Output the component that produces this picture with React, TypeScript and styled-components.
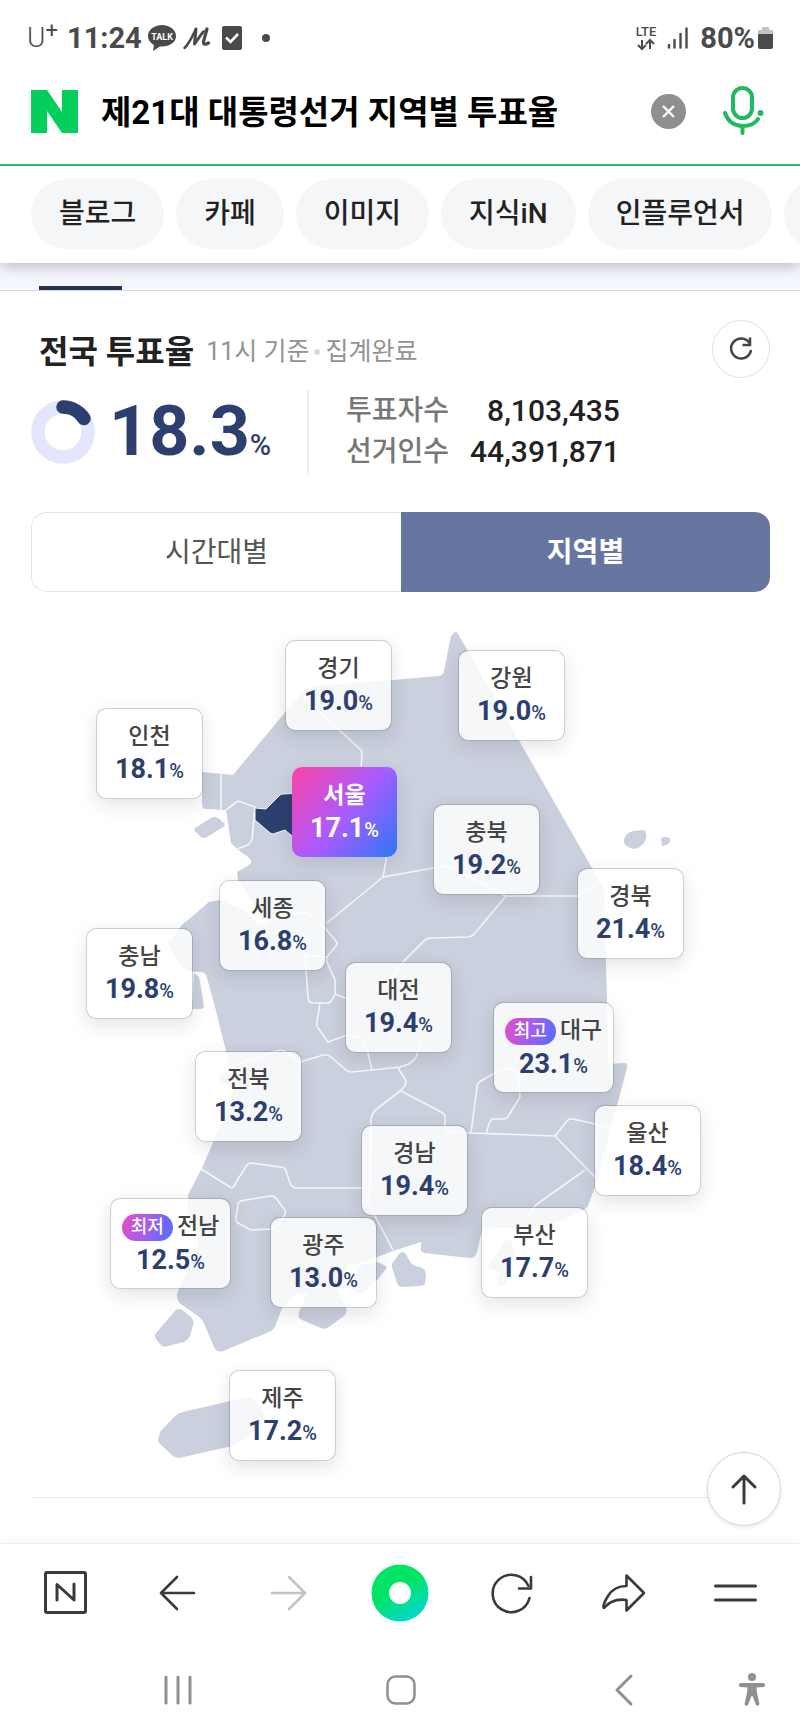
import React from "react";
import styled, { createGlobalStyle, css } from "styled-components";

const navy = "#2c3f6f";
const land = "#cad0de";
const ink = "#3a3a3e";
const fontStack = `Roboto, "Noto Sans CJK KR", sans-serif`;

const GlobalStyle = createGlobalStyle`
  *, *::before, *::after { box-sizing: border-box; }
  body { margin: 0; background: #fff; color: #222; font-family: ${fontStack}; }
  button, input { font-family: inherit; }
  svg { display: block; flex: none; overflow: visible; }
`;

const Page = styled.div`
  width: 100%;
  overflow: hidden;
  background: #fff;
`;

/* ---------- status bar ---------- */

const StatusBar = styled.div`
  position: relative;
  z-index: 2;
  display: flex;
  align-items: center;
  justify-content: space-between;
  height: 60px;
  padding: 16px 27px 0 27px;
  background: #fff;
  color: #4a4a4a;
`;

const StatusGroup = styled.div`
  display: flex;
  align-items: center;
`;

const Carrier = styled.span`
  display: flex;
  width: 40px;
  font-size: 28px;
  font-weight: 300;
  line-height: 32px;

  sup {
    font-size: 22px;
    font-weight: 400;
    line-height: 18px;
  }
`;

const StatusText = styled.span<{ $gap: number }>`
  margin-right: ${({ $gap }) => $gap}px;
  font-size: 29px;
  font-weight: 700;
  line-height: 32px;
`;

const StatusIcon = styled.svg<{ $gap: number }>`
  margin-right: ${({ $gap }) => $gap}px;
`;

/* ---------- search header ---------- */

const Header = styled.header`
  position: relative;
  z-index: 1;
  background: #fff;
  box-shadow: 0 3px 14px rgba(60, 60, 60, 0.35);
`;

const SearchForm = styled.form`
  display: flex;
  align-items: center;
  height: 106px;
  padding: 0 36px 2px 31px;
  border-bottom: 2px solid #37b36d;
`;

const SearchInput = styled.input`
  flex: 1;
  min-width: 0;
  margin: 0 16px 0 23px;
  padding: 3px 0 0;
  border: 0;
  outline: 0;
  background: none;
  color: #000;
  font-size: 33px;
  font-weight: 700;
  line-height: 44px;
`;

const IconButton = styled.button`
  display: grid;
  place-items: center;
  padding: 0;
  border: 0;
  background: none;
  color: ${ink};
`;

const ClearButton = styled(IconButton)`
  width: 35px;
  height: 35px;
  margin-right: 36px;
  border-radius: 50%;
  background: #8f8f8f;
`;

const ChipRow = styled.nav`
  display: flex;
  gap: 12px;
  padding: 13px 0 14px 31px;
  overflow: hidden;
`;

const Chip = styled.a`
  flex: none;
  min-width: 80px;
  height: 70px;
  padding: 0 28px;
  border-radius: 35px;
  background: #f5f6f8;
  color: #222;
  font-size: 28px;
  font-weight: 500;
  line-height: 70px;
  text-decoration: none;
`;

/* ---------- turnout summary ---------- */

const TabStrip = styled.div`
  display: flex;
  align-items: flex-end;
  height: 28px;
  padding-left: 39px;
  border-bottom: 1px solid #d5d8df;
  background: #f5f8ff;
`;

const TabIndicator = styled.span`
  width: 83px;
  height: 4px;
  background: #263258;
`;

const Summary = styled.section`
  padding: 29px 30px 0 31px;
`;

const HeadingRow = styled.div`
  display: flex;
  align-items: center;
  height: 58px;
  padding-left: 8px;
`;

const Heading = styled.h2`
  margin: 0 12px 0 0;
  padding-top: 6px;
  color: #222;
  font-size: 32px;
  font-weight: 700;
  line-height: 44px;
`;

const Basis = styled.p`
  display: flex;
  align-items: center;
  gap: 5px;
  flex: 1;
  margin: 0;
  padding-top: 6px;
  color: #939393;
  font-size: 25px;
  line-height: 36px;
`;

const Dot = styled.i`
  width: 6px;
  height: 6px;
  border-radius: 50%;
  background: #dadada;
`;

const RefreshButton = styled(IconButton)`
  width: 58px;
  height: 58px;
  border: 1px solid #e2e2e2;
  border-radius: 50%;
`;

const Figures = styled.div`
  display: flex;
  align-items: center;
  height: 83px;
  margin-top: 12px;
`;

const Rate = styled.strong`
  flex: none;
  width: 198px;
  margin-left: 14px;
  padding-top: 12px;
  color: ${navy};
  font-size: 70px;
  font-weight: 700;
  line-height: 80px;
  white-space: nowrap;
`;

const RateUnit = styled.small`
  font-size: 29px;
  font-weight: 500;
`;

const Counts = styled.table`
  height: 83px;
  padding-left: 37px;
  border-left: 2px solid #ececec;
  border-spacing: 0;
  font-size: 28px;
  line-height: 40px;

  th {
    padding: 0 21px 0 0;
    color: #777;
    font-weight: 500;
    text-align: left;
  }

  td {
    padding: 0;
    color: #222;
    font-size: 30px;
    font-weight: 500;
    text-align: right;
  }
`;

const Segments = styled.div`
  display: flex;
  height: 80px;
  margin-top: 39px;
  overflow: hidden;
  border-radius: 15px;
`;

const Segment = styled.button<{ $active?: boolean }>`
  flex: 1;
  padding: 0 0 4px;
  border: 1px solid #e4e4e4;
  border-right: 0;
  border-radius: 15px 0 0 15px;
  background: #fff;
  color: #555;
  font-size: 28px;
  font-weight: 400;

  ${({ $active }) =>
    $active &&
    css`
      border: 0;
      border-radius: 0;
      background: #6776a0;
      color: #fff;
      font-weight: 700;
    `}
`;

/* ---------- map ---------- */

const MapCanvas = styled.div`
  position: relative;
  max-width: 800px;
  margin: 18px auto 0;

  > svg {
    width: 100%;
    height: auto;
  }
`;

const MapPin = styled.button<{ $x: number; $y: number; $wide?: boolean; $selected?: boolean }>`
  position: absolute;
  left: ${({ $x }) => ($x / 800) * 100}%;
  top: ${({ $y }) => ($y / 887) * 100}%;
  display: flex;
  flex-direction: column;
  align-items: center;
  width: ${({ $wide }) => ($wide ? 121 : 107)}px;
  height: 91px;
  padding: ${({ $wide }) => ($wide ? 11 : 12)}px 0 0;
  border: 1px solid rgba(50, 50, 60, 0.24);
  border-radius: 10px;
  background: rgba(255, 255, 255, 0.82);
  background-clip: padding-box;
  box-shadow: 0 6px 18px rgba(40, 40, 50, 0.13);
  color: ${navy};

  ${({ $selected }) =>
    $selected &&
    css`
      width: 105px;
      height: 90px;
      border-color: transparent;
      background: linear-gradient(130deg, #ff42a4 0%, #a85cff 52%, #2c77f5 100%) border-box;
      color: #fff;
    `}
`;

const PinName = styled.span<{ $wide?: boolean; $selected?: boolean }>`
  display: flex;
  align-items: center;
  gap: 4px;
  height: ${({ $wide }) => ($wide ? 34 : 32)}px;
  color: ${({ $selected }) => ($selected ? "#fff" : "#444")};
  font-size: 23px;
  font-weight: ${({ $selected }) => ($selected ? 700 : 500)};
  line-height: 32px;
`;

const PinValue = styled.span`
  font-size: 27px;
  font-weight: 700;
  line-height: 32px;

  small {
    font-size: 20px;
    font-weight: 500;
  }
`;

const Tag = styled.b`
  height: 27px;
  padding: 0 9px;
  border-radius: 14px;
  background: linear-gradient(110deg, #e64fc0, #a45cf0 50%, #4b70fb);
  color: #fff;
  font-size: 18px;
  font-weight: 500;
  line-height: 26px;
`;

const SectionEnd = styled.div`
  position: relative;
  height: 46px;
  margin: 0 30px 0 31px;
  border-top: 1px solid #eaeaea;
`;

const TopButton = styled(IconButton)`
  position: absolute;
  top: -46px;
  right: -11px;
  width: 74px;
  height: 74px;
  border: 1px solid #d6d6d6;
  border-radius: 50%;
  background: #fff;
  box-shadow: 0 2px 4px rgba(0, 0, 0, 0.08);
`;

/* ---------- bottom bars ---------- */

const BrowserBar = styled.nav`
  display: grid;
  grid-template-columns: repeat(7, 1fr);
  align-items: center;
  height: 98px;
  padding: 0 9px 0 10px;
  border-top: 1px solid #ededed;
  box-shadow: 0 -3px 8px rgba(0, 0, 0, 0.03);
`;

const SystemBar = styled.nav`
  display: grid;
  grid-template-columns: repeat(7, 1fr);
  align-items: center;
  height: 93px;
  padding: 4px 8px 0 10px;

  button {
    color: #909090;
  }
  button:nth-child(-n + 3) {
    grid-column-end: span 2;
    padding-left: 50%;
  }
  button:nth-child(4) {
    padding-left: 32px;
  }
`;

const line = {
  fill: "none",
  stroke: "currentColor",
  strokeWidth: 3,
  strokeLinecap: "round" as const,
  strokeLinejoin: "round" as const,
};

const chips = ["블로그", "카페", "이미지", "지식iN", "인플루언서"];

type Region = { name: string; rate: string; x: number; y: number; tag?: string; selected?: boolean };

const regions: Region[] = [
  { name: "경기", rate: "19.0", x: 285, y: 30 },
  { name: "강원", rate: "19.0", x: 458, y: 40 },
  { name: "인천", rate: "18.1", x: 96, y: 98 },
  { name: "서울", rate: "17.1", x: 292, y: 157, selected: true },
  { name: "충북", rate: "19.2", x: 433, y: 194 },
  { name: "세종", rate: "16.8", x: 219, y: 270 },
  { name: "경북", rate: "21.4", x: 577, y: 258 },
  { name: "충남", rate: "19.8", x: 86, y: 318 },
  { name: "대전", rate: "19.4", x: 345, y: 352 },
  { name: "대구", rate: "23.1", x: 493, y: 392, tag: "최고" },
  { name: "전북", rate: "13.2", x: 195, y: 441 },
  { name: "울산", rate: "18.4", x: 594, y: 495 },
  { name: "경남", rate: "19.4", x: 361, y: 515 },
  { name: "전남", rate: "12.5", x: 110, y: 588, tag: "최저" },
  { name: "부산", rate: "17.7", x: 481, y: 597 },
  { name: "광주", rate: "13.0", x: 270, y: 607 },
  { name: "제주", rate: "17.2", x: 229, y: 760 },
];

const mainland =
  "M453 24 Q455 20 458 24 L592 258 L601 273 Q604 278 604 284 L607 390 L608 454 L624 453 Q628 453 627 458 L595 577 L588 596 L584 600 L553 614 L540 619 L483 617 L477 642 Q475 648 470 648 L424 643 L421 641 L421 632 L393 641 L377 647 L348 656 L338 678 L307 683 L293 685 L282 698 L276 714 Q275 719 269 722 L223 741 Q217 743 214 737 L203 711 L198 706 L181 694 Q175 689 178 681 L198 637 L197 627 L188 601 L188 585 L202 558 L227 500 L234 478 L220 472 L220 466 L230 457 L214 393 L207 368 Q206 362 201 362 L187 361 L177 350 L168 334 L182 315 L209 292 L220 290 L245 300 L257 313 L267 315 L258 301 L238 270 L237 262 L249 255 Q254 252 248 247 L237 239 L231 233 L226 200 L206 199 Q202 199 202 193 L202 162 L233 165 L287 100 L303 82 Q307 77 314 76 L393 70 L438 66 Q443 66 444 61 L451 26 Z";

const islands = [
  "M195 218 L211 208 Q215 206 218 208 L224 213 Q226 215 223 217 L207 227 Q204 229 201 227 L194 220 Z",
  "M624 229 Q627 222 633 221 L643 220 Q647 220 646 228 Q645 234 638 238 Q633 240 628 237 Q623 235 624 229 Z",
  "M661 228 Q666 226 670 228 L670 232 Q667 236 662 236 Z",
  "M194 363 L199 367 L204 396 Q204 399 200 399 L192 399 Z",
  "M174 702 Q177 697 182 700 L190 706 Q195 710 193 715 L190 726 Q188 730 184 732 L168 736 Q163 738 160 734 L156 729 Q154 726 156 723 Z",
  "M307 683 L299 702 Q297 708 302 710 L321 718 Q325 720 329 717 L344 706 Q348 702 346 697 L337 678 Z",
  "M362 684 L378 669 L386 659 Q388 656 384 655 L377 652 L360 655 L350 678 Z",
  "M398 645 Q403 638 408 648 Q411 656 419 657 Q426 658 426 665 L425 673 Q424 676 420 676 L403 677 Q398 677 397 673 L392 657 Q391 653 395 650 Z",
  "M504 632 L511 629 L515 643 L506 675 L498 676 L497 668 L500 662 L487 657 Z",
  "M183 802 L230 791 L248 787 Q252 787 255 790 L265 804 L264 811 L248 827 L232 836 L179 848 Q176 848 173 846 L160 834 Q157 831 159 827 L160 822 L175 806 Q178 803 183 802 Z",
];

const borders = [
  "M221 163 V199",
  "M226 200 L238 191 L255 197 L252 230 L248 235 L237 239",
  "M300 83 L337 118 L361 140 Q362 142 362 145 L361 160",
  "M387 245 L383 267 L327 313",
  "M383 267 L400 264 L433 258 L450 256 L464 264 L506 286 L578 286 L601 270",
  "M506 286 L475 323 Q473 326 469 327 L431 328 Q427 328 424 331 L403 352 L393 365",
  "M257 313 L300 303 L307 302 L326 319 L336 331 Q338 333 336 336 L327 347 L305 345 L308 388 Q309 393 313 393 L327 393 Q330 393 332 390 L335 384 L335 370 L327 352 L326 347",
  "M335 384 L350 390",
  "M320 393 L317 412 Q316 415 318 418 L328 432 L347 425 L362 428 L368 443 L372 460",
  "M230 457 L277 441 Q282 439 286 442 L300 452 L320 446 Q327 443 331 447 L346 460 Q348 462 352 462 L372 460 L400 457 L409 454 Q415 450 417 445 L421 430",
  "M398 458 L405 469 Q407 473 404 477 L400 481 L378 498 Q371 503 371 510 L370 578 L367 592 L375 606 L393 640",
  "M401 481 L441 502 Q445 504 445 508 L445 522 L471 523 L555 526 L567 511 Q569 508 573 509 L595 514 L612 518",
  "M471 523 L477 477 Q477 473 481 471 L493 464 L510 458 L518 463 L520 487 L509 505 Q507 509 503 509 L493 509 Q490 510 489 514 L486 524",
  "M555 526 L595 567",
  "M585 560 L540 592 Q535 595 533 599 L528 607",
  "M201 559 L230 577 Q232 579 234 576 L238 569 L247 555 Q248 553 251 553 L280 557 Q285 557 286 561 L290 573 Q292 578 297 578 L370 578",
  "M240 591 L271 586 Q274 586 276 588 L284 599 Q287 602 284 606 L277 616 Q276 619 272 619 L251 620 L238 613 Q236 612 236 608 L238 594 Q239 591 242 591",
];

function KoreaMap() {
  return (
    <svg viewBox="0 0 800 887" role="img" aria-label="지역별 투표율 지도">
      <g fill={land}>
        <path d={mainland} />
        {islands.map((d) => (
          <path key={d} d={d} />
        ))}
      </g>
      <g fill="none" stroke="#f4f6fa" strokeWidth="1.6" strokeLinejoin="round">
        {borders.map((d) => (
          <path key={d} d={d} />
        ))}
      </g>
      <path
        d="M255 198 L266 199 L280 185 Q281 184 283 184 L300 183 V229 L292 226 L285 220 L273 224 Q271 224 269 222 L255 210 Z"
        fill={navy}
        stroke="#f4f6fa"
        strokeWidth="1"
      />
    </svg>
  );
}

export default function App() {
  return (
    <Page>
      <GlobalStyle />
      <StatusBar>
        <StatusGroup>
          <Carrier>
            U<sup>+</sup>
          </Carrier>
          <StatusText $gap={6}>11:24</StatusText>
          <StatusIcon $gap={7} width="28" height="26" viewBox="0 0 28 26">
            <path
              d="M14 0C6 0 0 5 0 11c0 4 2.500 7 6 9l-1 6 7-4.500h2c8 0 14-4.500 14-10.500S22 0 14 0z"
              fill="#4a4a4a"
            />
            <text x="14" y="15" fill="#fff" fontSize="9" fontWeight="700" textAnchor="middle">
              TALK
            </text>
          </StatusIcon>
          <StatusIcon $gap={11} width="28" height="24" viewBox="0 0 28 24" stroke="#4a4a4a" fill="none" strokeLinecap="round" strokeLinejoin="round">
            <path d="M1.500 22 C6 18 10 9 13 3" strokeWidth="2.500" />
            <path d="M13 3 L11.500 18 L20 6" strokeWidth="3" />
            <path d="M24 3 L20.500 15.500 Q20 20 25.500 17" strokeWidth="3.200" />
            <path d="M20 6 L24 3" strokeWidth="1.500" />
          </StatusIcon>
          <StatusIcon $gap={20} width="20" height="24" viewBox="0 0 20 24">
            <rect width="20" height="24" rx="2" fill="#4a4a4a" />
            <path d="M4 11.500 L8.500 16 L16 8" fill="none" stroke="#fff" strokeWidth="2.600" />
          </StatusIcon>
          <StatusIcon $gap={0} width="8" height="8" viewBox="0 0 8 8">
            <circle cx="4" cy="4" r="4" fill="#4a4a4a" />
          </StatusIcon>
        </StatusGroup>
        <StatusGroup>
          <StatusIcon $gap={9} width="23" height="24" viewBox="0 0 23 24">
            <text x="11" y="10" fill="#4a4a4a" fontSize="13" fontWeight="500" textAnchor="middle">
              LTE
            </text>
            <g fill="none" stroke="#4a4a4a" strokeWidth="2">
              <path d="M7 14 V23 M3 19 L7 23 L11 19" />
              <path d="M15 23 V14 M11 18 L15 14 L19 18" />
            </g>
          </StatusIcon>
          <StatusIcon $gap={12} width="21" height="22" viewBox="0 0 21 22">
            <g stroke="#4a4a4a" strokeWidth="2.400" strokeLinecap="round">
              <path d="M2 18 V20.500" />
              <path d="M7.500 13 V20.500" />
              <path d="M13.500 7 V20.500" />
              <path d="M19.500 1.500 V20.500" />
            </g>
          </StatusIcon>
          <StatusText $gap={3}>80%</StatusText>
          <StatusIcon $gap={0} width="15" height="22" viewBox="0 0 15 22">
            <path d="M4 1 Q4 0 5 0 H10 Q11 0 11 1 V3 H14 Q15 3 15 4 V7 H0 V4 Q0 3 1 3 H4 Z" fill="#c2c2c2" />
            <path d="M0 7 H15 V20 Q15 22 13 22 H2 Q0 22 0 20 Z" fill="#4a4a4a" />
          </StatusIcon>
        </StatusGroup>
      </StatusBar>

      <Header>
        <SearchForm onSubmit={(e) => e.preventDefault()}>
          <svg width="47" height="43" viewBox="0 0 47 43" aria-label="NAVER">
            <path d="M0 0 H16 L31 22 V0 H47 V43 H31 L16 21 V43 H0 Z" fill="#03cf5d" />
          </svg>
          <SearchInput aria-label="검색어" defaultValue="제21대 대통령선거 지역별 투표율" />
          <ClearButton type="button" aria-label="지우기">
            <svg width="13" height="13" viewBox="0 0 13 13">
              <path d="M1 1 L12 12 M12 1 L1 12" stroke="#fff" strokeWidth="2.400" />
            </svg>
          </ClearButton>
          <IconButton type="button" aria-label="음성 검색">
            <svg width="42" height="50" viewBox="0 0 42 50" fill="none" stroke="#20b95f" strokeWidth="4" strokeLinecap="round">
              <rect x="11" y="2" width="19" height="30" rx="9.500" />
              <path d="M3 27 C6 36 13 40 20.500 40 C28 40 33 38 36 33" />
              <path d="M20.500 40 V47" />
              <circle cx="38.500" cy="27" r="3" fill="#20b95f" stroke="none" />
            </svg>
          </IconButton>
        </SearchForm>
        <ChipRow aria-label="검색 영역">
          {chips.map((chip) => (
            <Chip key={chip} href="#">
              {chip}
            </Chip>
          ))}
          <Chip href="#" aria-label="다음" />
        </ChipRow>
      </Header>

      <main>
        <TabStrip>
          <TabIndicator />
        </TabStrip>
        <Summary>
          <HeadingRow>
            <Heading>전국 투표율</Heading>
            <Basis>
              <span>11시 기준</span>
              <Dot />
              <span>집계완료</span>
            </Basis>
            <RefreshButton type="button" aria-label="새로고침">
              <svg width="24" height="24" viewBox="0 0 24 24" fill="none" stroke="#444" strokeWidth="2.500">
                <path d="M20.500 6 A10 10 0 1 0 22 13" />
                <path d="M21 0.500 V8 H13.500" />
              </svg>
            </RefreshButton>
          </HeadingRow>

          <Figures>
            <svg width="64" height="64" viewBox="0 0 64 64" fill="none" strokeWidth="13.500">
              <circle cx="32" cy="32" r="25" stroke="#e4e6fa" />
              <path d="M32 7 A25 25 0 0 1 53 18.500" stroke={navy} strokeLinecap="round" />
            </svg>
            <Rate>
              18.3<RateUnit>%</RateUnit>
            </Rate>
            <Counts>
              <tbody>
                <tr>
                  <th scope="row">투표자수</th>
                  <td>8,103,435</td>
                </tr>
                <tr>
                  <th scope="row">선거인수</th>
                  <td>44,391,871</td>
                </tr>
              </tbody>
            </Counts>
          </Figures>

          <Segments>
            <Segment type="button">시간대별</Segment>
            <Segment type="button" $active>
              지역별
            </Segment>
          </Segments>
        </Summary>

        <MapCanvas>
          <KoreaMap />
          {regions.map((r) => (
            <MapPin key={r.name} type="button" $x={r.x} $y={r.y} $wide={!!r.tag} $selected={r.selected}>
              <PinName $wide={!!r.tag} $selected={r.selected}>
                {r.tag && <Tag>{r.tag}</Tag>}
                {r.name}
              </PinName>
              <PinValue>
                {r.rate}
                <small>%</small>
              </PinValue>
            </MapPin>
          ))}
        </MapCanvas>

        <SectionEnd>
          <TopButton type="button" aria-label="맨 위로">
            <svg width="26" height="30" viewBox="0 0 26 30" {...line}>
              <path d="M13 29 V2 M2 13 L13 2 L24 13" />
            </svg>
          </TopButton>
        </SectionEnd>
      </main>

      <BrowserBar aria-label="브라우저 메뉴">
        <IconButton type="button" aria-label="홈">
          <svg width="43" height="43" viewBox="0 0 43 43" {...line}>
            <rect x="1.500" y="1.500" width="40" height="40" rx="1.500" />
            <path d="M13 29 V13.500 L30 29 V13" />
          </svg>
        </IconButton>
        <IconButton type="button" aria-label="뒤로">
          <svg width="36" height="36" viewBox="0 0 36 36" {...line} strokeWidth={2.600}>
            <path d="M35 18 H2 M18 2 L2 18 L18 34" />
          </svg>
        </IconButton>
        <IconButton type="button" aria-label="앞으로">
          <svg width="36" height="36" viewBox="0 0 36 36" {...line} strokeWidth={2.600} stroke="#c4c4c4">
            <path d="M1 18 H34 M18 2 L34 18 L18 34" />
          </svg>
        </IconButton>
        <IconButton type="button" aria-label="그린닷">
          <svg width="58" height="58" viewBox="0 0 58 58">
            <defs>
              <linearGradient id="dot" x1="0.3" y1="0.2" x2="0.8" y2="1">
                <stop offset="0.3" stopColor="#00e465" />
                <stop offset="1" stopColor="#06d6e0" />
              </linearGradient>
            </defs>
            <circle cx="29" cy="29" r="28.500" fill="url(#dot)" />
            <circle cx="29" cy="29" r="11" fill="#fff" />
          </svg>
        </IconButton>
        <IconButton type="button" aria-label="새로고침">
          <svg width="40" height="40" viewBox="0 0 40 40" {...line} strokeWidth={2.600}>
            <path d="M37.500 25 A18.700 18.700 0 1 1 36.500 13" />
            <path d="M39 4 V15.500 H27" />
          </svg>
        </IconButton>
        <IconButton type="button" aria-label="공유">
          <svg width="43" height="38" viewBox="0 0 43 38" {...line} strokeWidth={2.600}>
            <path d="M24.500 1.500 L42 19 L24.500 36.500 V26 C14 24.500 7 28 2 34 C0.500 34 2 28 6 22 C10 15.500 17 12 24.500 12 Z" />
          </svg>
        </IconButton>
        <IconButton type="button" aria-label="메뉴">
          <svg width="43" height="18" viewBox="0 0 43 18" {...line}>
            <path d="M1.500 2 H41.500 M1.500 16 H41.500" />
          </svg>
        </IconButton>
      </BrowserBar>

      <SystemBar aria-label="시스템 메뉴">
        <IconButton type="button" aria-label="최근 앱">
          <svg width="28" height="30" viewBox="0 0 28 30" {...line}>
            <path d="M2 2 V28 M14 2 V28 M26 2 V28" />
          </svg>
        </IconButton>
        <IconButton type="button" aria-label="홈 화면">
          <svg width="30" height="30" viewBox="0 0 30 30" {...line} strokeWidth={2.500}>
            <rect x="1.500" y="1.500" width="27" height="27" rx="8" />
          </svg>
        </IconButton>
        <IconButton type="button" aria-label="이전">
          <svg width="18" height="32" viewBox="0 0 18 32" {...line}>
            <path d="M16 2 L2 16 L16 30" />
          </svg>
        </IconButton>
        <IconButton type="button" aria-label="접근성">
          <svg width="28" height="33" viewBox="0 0 28 33" fill="currentColor">
            <circle cx="14" cy="4" r="4" />
            <path d="M2 10 H26 Q28 12 26 14 L18.500 14.500 L19 20 L21.500 31 Q20 34 18 32 L14.500 23 H13.500 L10 32 Q7 34 6.500 31 L9 20 L9.500 14.500 L2 14 Q0 12 2 10 Z" />
          </svg>
        </IconButton>
      </SystemBar>
    </Page>
  );
}
